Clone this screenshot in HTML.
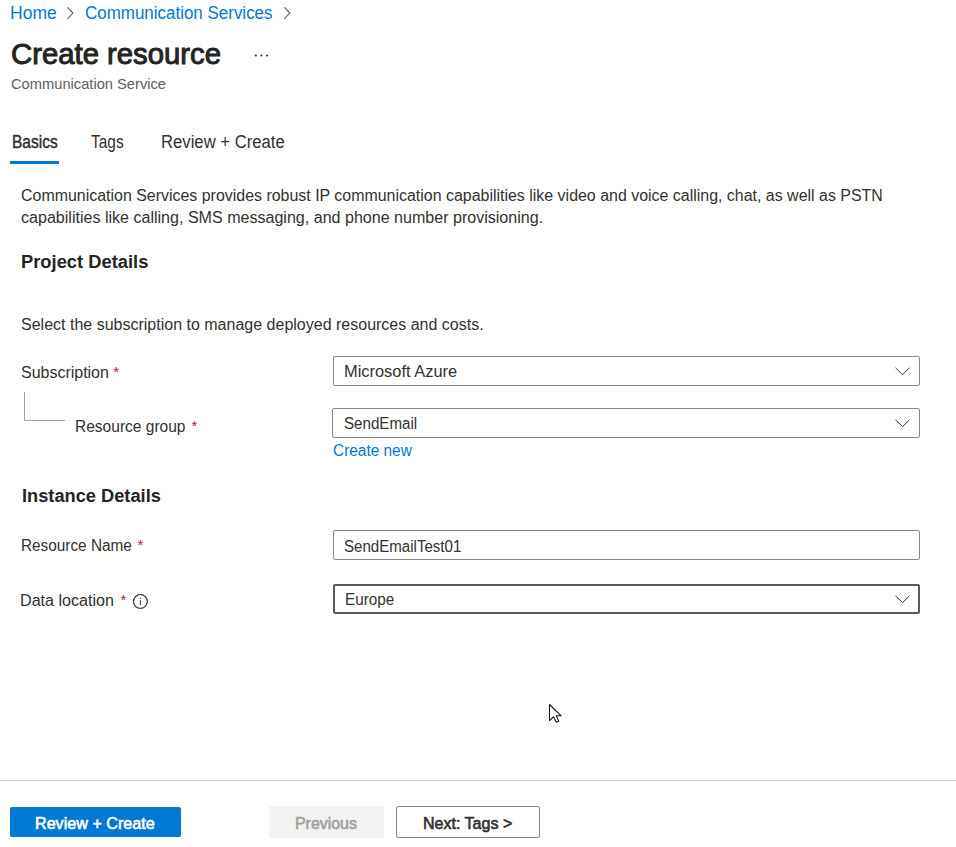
<!DOCTYPE html>
<html><head><meta charset="utf-8">
<style>
html,body{margin:0;padding:0;background:#fff;width:956px;height:847px;overflow:hidden;position:relative;font-family:"Liberation Sans",sans-serif;color:#323130;}
.t{position:absolute;white-space:nowrap;line-height:20px;height:20px;transform-origin:0 0;}
.box{position:absolute;box-sizing:border-box;border:1px solid #8a8886;border-radius:2px;background:#fff;}
.btn{position:absolute;box-sizing:border-box;border-radius:2px;}
</style></head><body>
<div style="position:absolute;left:10px;top:161px;width:49px;height:3px;background:#0078d4;"></div>
<div class="box" style="left:333px;top:356px;width:587px;height:30px;"></div>
<div class="box" style="left:332px;top:408px;width:588px;height:30px;"></div>
<div class="box" style="left:333px;top:530px;width:587px;height:30px;"></div>
<div class="box" style="left:333px;top:584px;width:587px;height:30px;border:2px solid #5c5a58;"></div>
<div style="position:absolute;left:0;top:780px;width:956px;height:1px;background:#d2d0ce;"></div>
<div class="btn" style="left:10px;top:807px;width:171px;height:30px;background:#0078d4;"></div>
<div class="btn" style="left:269px;top:806px;width:115px;height:32px;background:#f3f2f1;"></div>
<div class="btn" style="left:396px;top:806px;width:144px;height:32px;background:#fff;border:1px solid #8a8886;"></div>
<div id="home" class="t" style="left:10.11px;top:3.00px;font-size:17.5px;color:#0078d4;transform:scaleX(1.0022);">Home</div>
<div id="comm" class="t" style="left:85.12px;top:3.00px;font-size:17.5px;color:#0078d4;transform:scaleX(0.9689);">Communication Services</div>
<div id="title" class="t" style="left:11.08px;top:44.00px;font-size:30px;color:#252423;-webkit-text-stroke:1.0px #252423;transform:scaleX(0.9765);">Create resource</div>
<div id="sub" class="t" style="left:10.91px;top:74.00px;font-size:15px;color:#605e5c;transform:scaleX(0.9787);">Communication Service</div>
<div id="tab1" class="t" style="left:11.64px;top:132.00px;font-size:18px;color:#323130;-webkit-text-stroke:0.45px #323130;transform:scaleX(0.8618);">Basics</div>
<div id="tab2" class="t" style="left:91.44px;top:132.00px;font-size:18px;color:#323130;transform:scaleX(0.8579);">Tags</div>
<div id="tab3" class="t" style="left:160.63px;top:132.00px;font-size:18px;color:#323130;transform:scaleX(0.9265);">Review + Create</div>
<div id="p1" class="t" style="left:21.00px;top:186.00px;font-size:16px;color:#323130;transform:scaleX(0.9963);">Communication Services provides robust IP communication capabilities like video and voice calling, chat, as well as PSTN</div>
<div id="p2" class="t" style="left:21.00px;top:208.00px;font-size:16px;color:#323130;transform:scaleX(1.0035);">capabilities like calling, SMS messaging, and phone number provisioning.</div>
<div id="h1" class="t" style="left:21.42px;top:252.00px;font-size:18px;color:#252423;font-weight:bold;transform:scaleX(1.0188);">Project Details</div>
<div id="sel" class="t" style="left:21.00px;top:315.00px;font-size:16px;color:#323130;transform:scaleX(1.0004);">Select the subscription to manage deployed resources and costs.</div>
<div id="lab1" class="t" style="left:20.88px;top:363.00px;font-size:16px;color:#323130;transform:scaleX(0.9982);">Subscription</div>
<div id="ast1" class="t" style="left:113.30px;top:362.00px;font-size:15px;color:#a4262c;">*</div>
<div id="v1" class="t" style="left:343.88px;top:362.00px;font-size:16px;color:#323130;transform:scaleX(1.0258);">Microsoft Azure</div>
<div id="lab2" class="t" style="left:74.79px;top:417.00px;font-size:16px;color:#323130;transform:scaleX(0.9704);">Resource group</div>
<div id="ast2" class="t" style="left:191.50px;top:416.00px;font-size:15px;color:#a4262c;">*</div>
<div id="v2" class="t" style="left:343.59px;top:414.00px;font-size:16px;color:#323130;transform:scaleX(0.9460);">SendEmail</div>
<div id="cn" class="t" style="left:332.70px;top:441.00px;font-size:16px;color:#0078d4;transform:scaleX(0.9634);">Create new</div>
<div id="h2" class="t" style="left:21.73px;top:486.00px;font-size:18px;color:#252423;font-weight:bold;transform:scaleX(1.0131);">Instance Details</div>
<div id="lab3" class="t" style="left:21.04px;top:536.00px;font-size:16px;color:#323130;transform:scaleX(0.9586);">Resource Name</div>
<div id="ast3" class="t" style="left:137.40px;top:535.00px;font-size:15px;color:#a4262c;">*</div>
<div id="v3" class="t" style="left:343.69px;top:537.00px;font-size:16px;color:#323130;transform:scaleX(0.9421);">SendEmailTest01</div>
<div id="lab4" class="t" style="left:19.99px;top:591.00px;font-size:16px;color:#323130;transform:scaleX(1.0067);">Data location</div>
<div id="ast4" class="t" style="left:120.50px;top:590.00px;font-size:15px;color:#a4262c;">*</div>
<div id="v4" class="t" style="left:344.51px;top:590.00px;font-size:16px;color:#323130;transform:scaleX(0.9537);">Europe</div>
<div id="b1" class="t" style="left:35.22px;top:814.00px;font-size:16px;color:#fff;-webkit-text-stroke:0.6px #fff;transform:scaleX(1.0083);">Review + Create</div>
<div id="b2" class="t" style="left:295.32px;top:814.00px;font-size:16px;color:#a19f9d;-webkit-text-stroke:0.6px #a19f9d;transform:scaleX(0.9943);">Previous</div>
<div id="b3" class="t" style="left:422.65px;top:814.00px;font-size:16px;color:#323130;-webkit-text-stroke:0.6px #323130;transform:scaleX(1.0020);">Next: Tags &gt;</div>
<svg width="956" height="847" style="position:absolute;left:0;top:0;" viewBox="0 0 956 847">
  <g fill="none" stroke="#605e5c" stroke-width="1.1">
    <path d="M67.5 7.3 L72.9 13.1 L67.5 18.9"/>
    <path d="M284.4 7.3 L289.8 13.1 L284.4 18.9"/>
  </g>
  <g fill="#323130">
    <circle cx="255.8" cy="55.5" r="1.1"/>
    <circle cx="261.4" cy="55.5" r="1.1"/>
    <circle cx="267.1" cy="55.5" r="1.1"/>
  </g>
  <path d="M24.5 392 L24.5 420.5 L65 420.5" fill="none" stroke="#a19f9d" stroke-width="1"/>
  <g fill="none" stroke="#323130" stroke-width="1">
    <path d="M895.5 367.8 L902.5 374.6 L909.5 367.8"/>
    <path d="M895.5 419.8 L902.5 426.6 L909.5 419.8"/>
    <path d="M895.5 595.8 L902.5 602.6 L909.5 595.8"/>
  </g>
  <circle cx="140.4" cy="601.4" r="6.9" fill="none" stroke="#201f1e" stroke-width="1.1"/>
  <rect x="139.9" y="600.2" width="1" height="4.8" fill="#323130"/>
  <rect x="139.9" y="597.8" width="1" height="1.2" fill="#323130"/>
  <path d="M549.5 704.5 L549.5 720.5 L553.5 716.8 L556.3 722.3 L558.8 721.2 L556.2 715.7 L561 715.7 Z" fill="#fff" stroke="#111" stroke-width="1.05" stroke-linejoin="round"/>
</svg>
</body></html>
